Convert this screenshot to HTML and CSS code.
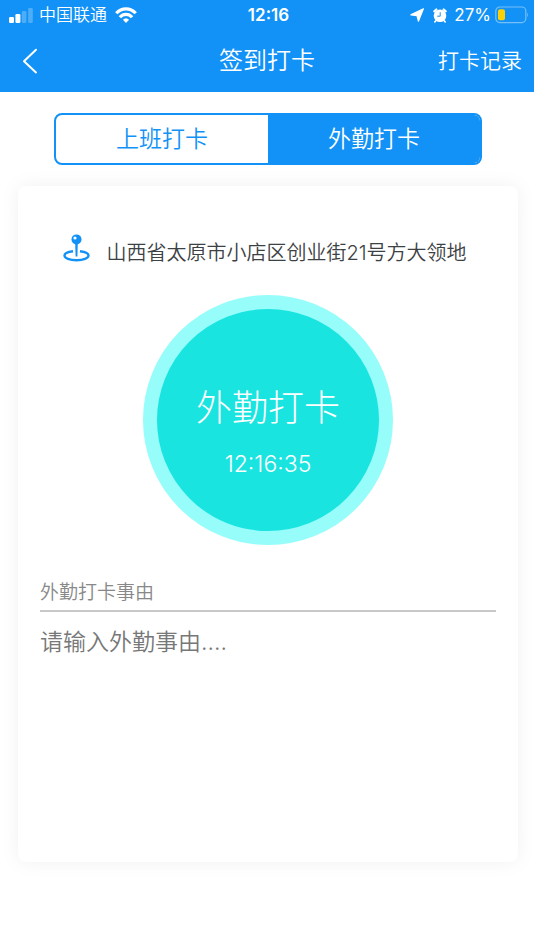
FILE: index.html
```html
<!DOCTYPE html>
<html lang="zh-CN">
<head>
<meta charset="utf-8">
<meta name="viewport" content="width=device-width, initial-scale=1">
<title>签到打卡</title>
<link rel="stylesheet" href="styles.css">
</head>
<body>
<header class="top">
  <div class="status">
    <div class="status-side">
      <svg width="24" height="16" viewBox="0 0 24 16" fill="#fff" aria-hidden="true">
        <rect x="0" y="10" width="5" height="6" rx="1.3"/>
        <rect x="6.400" y="7" width="5" height="9" rx="1.300"/>
        <rect x="12.800" y="4" width="4.600" height="12" rx="1.300" opacity=".25"/>
        <rect x="19.200" y="1" width="4.600" height="15" rx="1.300" opacity=".25"/>
      </svg>
      <span class="carrier">中国联通</span>
      <svg class="wifi" width="22" height="16" viewBox="0 0 22 16" fill="none" stroke="#fff" stroke-width="3.200" aria-hidden="true">
        <path d="M1.300 6.300C6.600.4 15.400.4 20.700 6.300"/>
        <path d="M4.900 10.200C8.300 6.400 13.700 6.400 17.100 10.200"/>
        <path d="M11 16 7.900 12.800Q11 9.800 14.100 12.800Z" fill="#fff" stroke="none"/>
      </svg>
    </div>
    <span class="clock">12:16</span>
    <div class="status-side status-end">
      <svg width="14" height="14" viewBox="0 0 14 14" fill="#fff" aria-hidden="true"><path d="M13.400.8 8.400 13.200 7 7.600.8 6.800Z" stroke="#fff" stroke-width="1.200" stroke-linejoin="round"/></svg>
      <svg class="alarm" width="14" height="15" viewBox="0 0 14 15" aria-hidden="true">
        <g stroke="#fff" stroke-linecap="round"><path d="M1.300 3.300 3.300 1.500M12.700 3.300 10.700 1.500" stroke-width="2.200"/><path d="M3 12.500 1.800 13.900M11 12.500 12.200 13.900" stroke-width="1.600"/></g>
        <circle cx="7" cy="7.800" r="6.300" fill="#fff"/>
        <path d="M7.200 4.200V8.200H4.200" fill="none" stroke="#1292f6" stroke-width="1"/>
      </svg>
      <span class="percent">27%</span>
      <svg width="33" height="18" viewBox="0 0 33 18" aria-hidden="true">
        <rect x=".8" y="1" width="30" height="15.600" rx="4" fill="none" stroke="#fff" stroke-opacity=".42" stroke-width="1.200"/>
        <rect x="3" y="3.200" width="7" height="11" rx="2" fill="#fdd108"/>
        <path d="M32 6.500Q33.400 8.800 32 11.200Z" fill="#fff" opacity=".5"/>
      </svg>
    </div>
  </div>
  <nav class="nav">
    <button class="back" type="button" aria-label="返回">
      <svg width="16" height="26" viewBox="0 0 16 26" fill="none" stroke="#fff" stroke-width="2" stroke-linecap="round" stroke-linejoin="round" aria-hidden="true"><path d="M14 1.800 2 13.200 14 24.400"/></svg>
    </button>
    <h1 class="title">签到打卡</h1>
    <a class="records" href="#records">打卡记录</a>
  </nav>
</header>
<main class="main">
  <div class="tabs">
    <button class="tab" type="button" aria-pressed="false">上班打卡</button>
    <button class="tab tab-active" type="button" aria-pressed="true">外勤打卡</button>
  </div>
  <section class="card">
    <p class="address">
      <svg class="pin" width="27" height="29" viewBox="0 0 27 29" aria-hidden="true">
        <path d="M10 17.200C5.200 17.700 1.500 19.200 1.500 21.600C1.500 24.300 6.600 26.200 13.500 26.200S25.500 24.300 25.500 21.600C25.500 19.200 21.800 17.700 17 17.200" fill="none" stroke="#1292f6" stroke-width="2.400"/>
        <path d="M12.200 9H14.800L14.400 22.400H12.600Z" fill="#1292f6"/>
        <circle cx="13.500" cy="5.400" r="5" fill="#1292f6"/>
        <circle cx="12" cy="4" r="1.600" fill="#fff"/>
      </svg>
      <span>山西省太原市小店区创业街21号方大领地</span>
    </p>
    <button class="punch" type="button">
      <span class="punch-label">外勤打卡</span>
      <span class="punch-time">12:16:35</span>
    </button>
    <label class="reason-label" for="reason">外勤打卡事由</label>
    <textarea class="reason" id="reason" placeholder="请输入外勤事由...."></textarea>
  </section>
</main>
</body>
</html>
```
FILE: styles.css
```css
* { box-sizing: border-box; }
body {
  margin: 0;
  min-height: 100vh;
  background: #fff;
  color: #3c4144;
  font-family: Inter, "Noto Sans CJK SC", sans-serif;
  font-weight: 350;
}
button, textarea { font: inherit; }
button { padding: 0; border: 0; background: none; cursor: pointer; }
svg { display: block; flex: none; }

.top { background: #1292f6; color: #fff; }
.status {
  display: grid;
  grid-template-columns: 1fr auto 1fr;
  align-items: center;
  height: 30px;
  padding: 0 6px 0 9px;
}
.status-side { display: flex; align-items: center; gap: 6px; }
.status-end { gap: 4px; justify-content: flex-end; }
.wifi { margin-left: 2px; }
.alarm { margin: 0 3px 0 5px; }
.carrier { font-size: 17px; line-height: 24px; }
.clock { font-size: 17px; line-height: 24px; font-weight: 600; }
.percent { font-size: 17px; line-height: 24px; font-weight: 400; }

.nav {
  display: grid;
  grid-template-columns: 1fr auto 1fr;
  align-items: center;
  height: 62px;
  padding: 0 12px;
}
.back { justify-self: start; padding: 0 10px; }
.title { margin: 0; font-size: 24px; line-height: 32px; font-weight: 350; }
.records {
  justify-self: end;
  color: inherit;
  font-size: 21px;
  line-height: 32px;
  text-decoration: none;
}

.main { padding: 21px 16px 20px 18px; }
.tabs {
  display: grid;
  grid-template-columns: 1fr 1fr;
  margin: 0 36px;
  border: 2px solid #1292f6;
  border-radius: 8px;
  overflow: hidden;
}
.tab { height: 48px; color: #1292f6; font-size: 23px; line-height: 32px; }
.tab-active { background: #1292f6; color: #fff; }

.card {
  display: flex;
  flex-direction: column;
  min-height: 676px;
  margin-top: 21px;
  padding: 47px 22px 22px;
  border-radius: 8px;
  background: #fff;
  box-shadow: 0 0 20px rgba(0, 0, 0, .06);
}
.address {
  display: flex;
  align-items: center;
  justify-content: center;
  gap: 16px;
  margin: 0;
  padding-right: 6px;
  font-size: 20px;
  line-height: 40px;
}
.pin { margin-bottom: 10px; }
.punch {
  display: flex;
  flex-direction: column;
  align-items: center;
  justify-content: center;
  gap: 16px;
  align-self: center;
  width: 250px;
  height: 250px;
  margin-top: 22px;
  padding-top: 24px;
  border: 14px solid #97fdfa;
  border-radius: 50%;
  background: #1ae4e0;
  color: #fff;
  font-weight: 300;
}
.punch-label { font-size: 36px; line-height: 48px; }
.punch-time { font-size: 23px; line-height: 32px; }
.reason-label {
  margin-top: 32px;
  padding-bottom: 1px;
  border-bottom: 2px solid #c8c8c8;
  color: #888;
  font-size: 19px;
  line-height: 32px;
}
.reason {
  flex: 1;
  width: 100%;
  margin-top: 14px;
  padding: 0;
  border: 0;
  outline: 0;
  resize: none;
  background: none;
  color: #3c4144;
  font-size: 23px;
  line-height: 32px;
}
.reason::placeholder { color: #777; opacity: 1; }
```
